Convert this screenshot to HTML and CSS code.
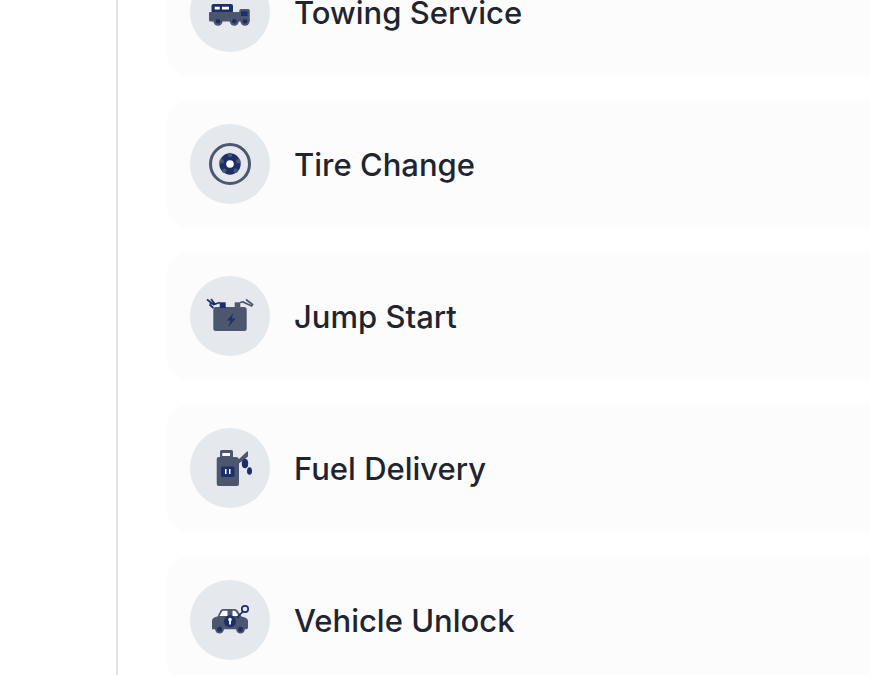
FILE: index.html
```html
<!doctype html>
<html lang="en">
    <head>
        <meta charset="UTF-8" />
        <meta name="viewport" content="width=device-width, initial-scale=1" />
        <title>Services</title>
        <link rel="stylesheet" href="styles.css">
    </head>

    <body>
        <main class="panel">
            <ul class="services">
                <li class="service">
                    <span class="service-icon">
                        <svg viewBox="0 0 60 60" aria-hidden="true">
                            <rect class="navy" x="11.5" y="22" width="21.5" height="9" rx="2" />
                            <path class="white" d="M14.7 24.7h5v2.8h-5zM22 24.7h7v2.8h-7z" />
                            <path class="slate" d="M10 30h29.3v-1.500q0-1.500 1.500-1.500h7.500q1.500 0 1.500 1.500V39.500H10.500Q9 39.500 9 38V31q0-1 1-1z" />
                            <rect class="navy" x="41" y="29.300" width="6.500" height="4.700" />
                            <circle class="slate" cx="18" cy="39.300" r="4.500" />
                            <circle class="slate" cx="34.300" cy="39.300" r="4.500" />
                            <circle class="slate" cx="45" cy="39.300" r="4.500" />
                            <circle class="navy" cx="18" cy="39.300" r="2.300" />
                            <circle class="navy" cx="34.300" cy="39.300" r="2.300" />
                            <circle class="navy" cx="45" cy="39.300" r="2.300" />
                        </svg>
                    </span>
                    <span class="service-name">Towing Service</span>
                </li>
                <li class="service">
                    <span class="service-icon">
                        <svg viewBox="0 0 60 60" aria-hidden="true">
                            <circle class="tire" cx="30" cy="30" r="19.5" />
                            <circle class="navy" cx="30" cy="30" r="10.7" />
                            <circle class="slate" cx="30" cy="21" r="2.2" />
                            <circle class="slate" cx="38.3" cy="27.2" r="2.2" />
                            <circle class="slate" cx="35.7" cy="36.8" r="2.2" />
                            <circle class="slate" cx="24.3" cy="36.8" r="2.2" />
                            <circle class="slate" cx="21.7" cy="27.2" r="2.2" />
                            <circle class="white" cx="30" cy="30" r="3.8" />
                        </svg>
                    </span>
                    <span class="service-name">Tire Change</span>
                </li>
                <li class="service">
                    <span class="service-icon">
                        <svg viewBox="0 0 60 60" aria-hidden="true">
                            <rect class="slate" x="13.3" y="21" width="33.4" height="24" rx="2.5" />
                            <rect class="navy" x="19.7" y="16.3" width="6" height="5.7" />
                            <rect class="slate" x="34.7" y="16.3" width="5.6" height="5.7" />
                            <path class="navy-line" d="M20 16.500l-5 1.500-4-5M7 13.500l6.500 5 3-.8M9.500 18.500l4 3.500M9.500 18l4-.5" />
                            <path class="slate-line" d="M40 16.500l3-.5 8.500 4 1-1.500-6.500-5" />
                            <path class="navy" d="M33.5 27L27 34.500h3.700L28.300 41l7.200-8.500h-3.800z" />
                        </svg>
                    </span>
                    <span class="service-name">Jump Start</span>
                </li>
                <li class="service">
                    <span class="service-icon">
                        <svg viewBox="0 0 60 60" aria-hidden="true">
                            <path class="slate" d="M21.5 12h10q1.500 0 1.500 1.500V19h3q2 0 3 2l8-7.500h1v5L39 25.500V46q0 2-2 2H18.700q-2 0-2-2V21q0-2 2-2H20v-5.500q0-1.500 1.500-1.500z" />
                            <rect class="white" x="22.3" y="15" width="7.7" height="3" />
                            <rect class="navy" x="21" y="28.5" width="13.5" height="10.5" rx="1.5" />
                            <path class="white" d="M25 31h1.500v5H25zM29 31h1.500v5H29z" />
                            <ellipse class="navy" cx="45" cy="25.5" rx="3.2" ry="4.7" />
                            <ellipse class="navy" cx="49.5" cy="33" rx="2.5" ry="3.8" />
                        </svg>
                    </span>
                    <span class="service-name">Fuel Delivery</span>
                </li>
                <li class="service">
                    <span class="service-icon">
                        <svg viewBox="0 0 60 60" aria-hidden="true">
                            <path class="slate" d="M12 39.300V31q0-3 3.500-4l2-.5 3-6q.8-1.500 2.500-1.500h12q1.500 0 2.500 1.500l4 6 3.500 1q3 1 3 4v6q0 1.800-1.500 1.800z" />
                            <path class="white" d="M19.500 26l2.500-4.500q.4-.7 1.200-.7H27.500V26zM32.500 20.800h2q.8 0 1.200.6l3 4.600h-6.200z" />
                            <circle class="slate" cx="19.5" cy="39.3" r="4.3" />
                            <circle class="slate" cx="40.500" cy="39.3" r="4.3" />
                            <circle class="navy" cx="19.5" cy="39.3" r="2.5" />
                            <circle class="navy" cx="40.500" cy="39.3" r="2.5" />
                            <circle class="navy" cx="30" cy="31.3" r="6" />
                            <path class="white" d="M28.200 29.500a1.800 1.800 0 1 1 2.700 1.600v3.400h-1.800v-3.400a1.800 1.800 0 0 1-.9-1.600z" />
                            <circle class="navy-line" cx="45" cy="19" r="3.2" />
                            <path class="navy-line" d="M43 21.500L37.500 27l1.300 1" />
                        </svg>
                    </span>
                    <span class="service-name">Vehicle Unlock</span>
                </li>
            </ul>
        </main>
    </body>
</html>
```
FILE: styles.css
```css
* {
    box-sizing: border-box;
}
body {
    margin: 0;
    height: 100vh;
    overflow: hidden;
    background-color: #fff;
    color: #1f2530;
    font-family: Inter, "Liberation Sans", sans-serif;
}
.panel {
    min-height: 100vh;
    margin-left: 116px;
    padding-left: 48px;
    border-left: 2px solid #e2e3e9;
    overflow: hidden;
}
/* the list is scrolled part of the way past its first card */
.services {
    display: flex;
    flex-direction: column;
    gap: 24px;
    margin: -52px 0 0;
    padding: 0;
    list-style: none;
}
.service {
    display: flex;
    align-items: center;
    gap: 24px;
    padding: 24px;
    border-radius: 24px 0 0 24px;
    background-color: #fcfcfc;
}
.service-icon {
    display: flex;
    align-items: center;
    justify-content: center;
    width: 80px;
    height: 80px;
    border-radius: 50%;
    background-color: #e5e8ed;
}
.service-icon svg {
    width: 60px;
    height: 60px;
}
.service-name {
    padding-top: 2px;
    font-size: 31px;
    font-weight: 500;
    line-height: 40px;
}
.navy {
    fill: #1b2f6b;
}
.slate {
    fill: #4c566f;
}
.white {
    fill: #fff;
}
.tire {
    fill: none;
    stroke: #4c566f;
    stroke-width: 3;
}
.navy-line {
    fill: none;
    stroke: #1b2f6b;
    stroke-width: 1.7;
}
.slate-line {
    fill: none;
    stroke: #4c566f;
    stroke-width: 1.7;
}
```
